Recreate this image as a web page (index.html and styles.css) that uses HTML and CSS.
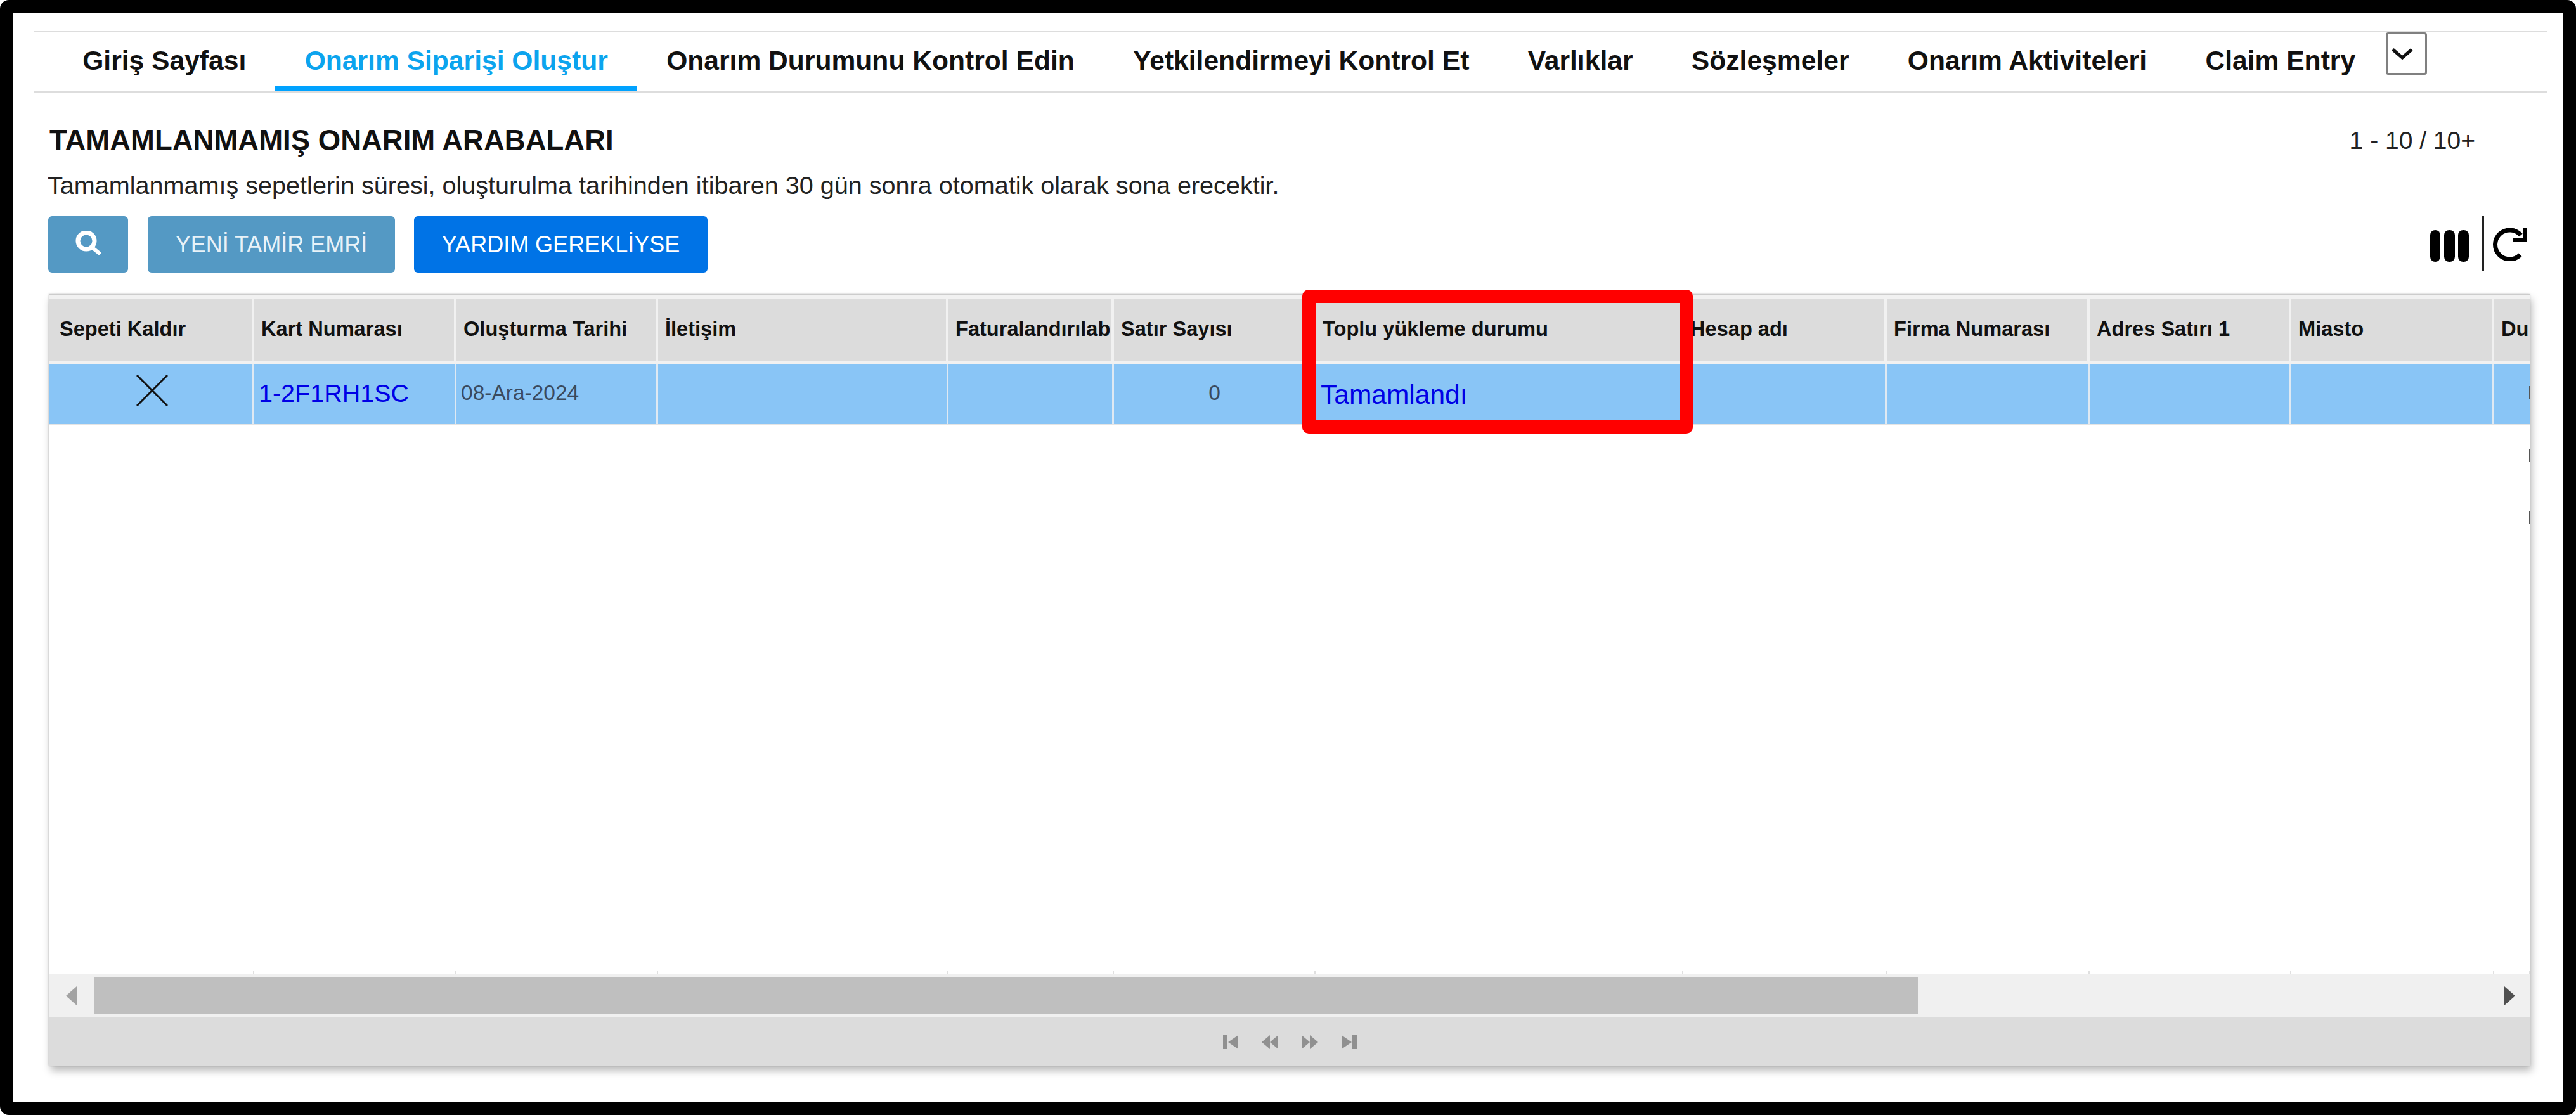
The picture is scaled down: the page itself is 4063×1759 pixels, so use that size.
FILE: index.html
```html
<!DOCTYPE html>
<html lang="tr">
<head>
<meta charset="utf-8">
<title>Tamamlanmamış Onarım Arabaları</title>
<link rel="stylesheet" href="styles.css">
</head>
<body>
<div class="frame">
  <nav class="nav">
    <a class="nav-item">Giriş Sayfası</a>
    <a class="nav-item active">Onarım Siparişi Oluştur</a>
    <a class="nav-item">Onarım Durumunu Kontrol Edin</a>
    <a class="nav-item">Yetkilendirmeyi Kontrol Et</a>
    <a class="nav-item">Varlıklar</a>
    <a class="nav-item">Sözleşmeler</a>
    <a class="nav-item">Onarım Aktiviteleri</a>
    <a class="nav-item">Claim Entry</a>
    <button class="more"><svg width="34" height="18" viewBox="0 0 34 18"><path d="M2 2 L17 15 L32 2" fill="none" stroke="#111" stroke-width="5"/></svg></button>
  </nav>
  <div class="title-row">
    <h1 class="title">TAMAMLANMAMIŞ ONARIM ARABALARI</h1>
    <div class="count">1 - 10 / 10+</div>
  </div>
  <p class="note">Tamamlanmamış sepetlerin süresi, oluşturulma tarihinden itibaren 30 gün sonra otomatik olarak sona erecektir.</p>
  <div class="toolbar">
    <button class="btn btn-muted btn-search"><svg width="40" height="38" viewBox="0 0 40 38"><circle cx="17" cy="16" r="13" fill="none" stroke="#fff" stroke-width="7"/><path d="M27 27 L37 35" stroke="#fff" stroke-width="6" stroke-linecap="round"/></svg></button>
    <button class="btn btn-muted btn-new">YENİ TAMİR EMRİ</button>
    <button class="btn btn-primary">YARDIM GEREKLİYSE</button>
    <div class="tools">
      <svg class="icon-cols" width="61" height="50" viewBox="0 0 61 50"><g fill="#000"><rect x="0" y="0" width="16" height="50" rx="8"/><rect x="22" y="0" width="17" height="50" rx="8"/><rect x="44" y="0" width="17" height="50" rx="8"/></g></svg>
      <span class="tool-sep"></span>
      <svg class="icon-refresh" width="54" height="53" viewBox="0 0 54 53"><path d="M43 43 A23 23 0 1 1 44 12" fill="none" stroke="#000" stroke-width="7"/><path d="M31 20 H50 V1" fill="none" stroke="#000" stroke-width="6"/></svg>
    </div>
  </div>
  <div class="table-wrap">
    <div class="table">
      <div class="cols head">
        <div class="th">Sepeti Kaldır</div>
        <div class="th">Kart Numarası</div>
        <div class="th">Oluşturma Tarihi</div>
        <div class="th">İletişim</div>
        <div class="th">Faturalandırılabilir</div>
        <div class="th">Satır Sayısı</div>
        <div class="th">Toplu yükleme durumu</div>
        <div class="th">Hesap adı</div>
        <div class="th">Firma Numarası</div>
        <div class="th">Adres Satırı 1</div>
        <div class="th">Miasto</div>
        <div class="th">Durum</div>
      </div>
      <div class="cols row selected">
        <div class="td td-x"><svg width="50" height="50" viewBox="0 0 50 50"><path d="M1 1 L49 49 M49 1 L1 49" stroke="#111" stroke-width="3"/></svg></div>
        <div class="td link">1-2F1RH1SC</div>
        <div class="td grey">08-Ara-2024</div>
        <div class="td"></div>
        <div class="td"></div>
        <div class="td grey num">0</div>
        <div class="td link status">Tamamlandı</div>
        <div class="td"></div>
        <div class="td"></div>
        <div class="td"></div>
        <div class="td"></div>
        <div class="td"><span class="clip-mark"></span></div>
      </div>
      <div class="blank"><span class="clip-mark"></span></div>
      <div class="blank"><span class="clip-mark"></span></div>
      <div class="spacer"></div>
      <div class="cols ticks">
        <i></i><i></i><i></i><i></i><i></i><i></i><i></i><i></i><i></i><i></i><i></i><i></i>
      </div>
      <div class="scrollbar">
        <span class="arrow arrow-left"></span>
        <span class="thumb"></span>
        <span class="arrow arrow-right"></span>
      </div>
      <div class="pager">
        <svg width="24" height="22" viewBox="0 0 24 22"><path d="M0 0H7V22H0Z M24 0V22L8 11Z" fill="#909090"/></svg>
        <svg width="26" height="22" viewBox="0 0 26 22"><path d="M13 0V22L0 11Z M26 0V22L13 11Z" fill="#909090"/></svg>
        <svg width="26" height="22" viewBox="0 0 26 22"><path d="M0 0V22L13 11Z M13 0V22L26 11Z" fill="#909090"/></svg>
        <svg width="24" height="22" viewBox="0 0 24 22"><path d="M17 0H24V22H17Z M0 0V22L16 11Z" fill="#909090"/></svg>
      </div>
    </div>
    <div class="highlight"></div>
  </div>
</div>
</body>
</html>
```
FILE: styles.css
```css
* { box-sizing: border-box; }
html, body { margin: 0; padding: 0; background: #fff; }
body { font-family: "Liberation Sans", Arial, sans-serif; color: #111; }
.frame {
  width: 4063px; height: 1759px;
  border: 21px solid #000; border-radius: 14px;
  background: #fff; overflow: hidden;
}
.nav {
  display: flex; align-items: flex-start;
  margin: 28px 25px 0 33px; height: 97px; padding-left: 30px;
  border-top: 2px solid #ddd; border-bottom: 2px solid #ddd;
}
.nav-item {
  padding: 0 46.2px; line-height: 88px; height: 93px;
  font-size: 42.6px; font-weight: 700; color: #111; white-space: nowrap;
  border-bottom: 8px solid transparent;
}
.nav-item.active { color: #0ca4ee; border-bottom-color: #00a2ff; }
.more {
  flex: none; width: 65px; height: 67px; margin: 0 0 0 2px; padding: 1px 0 0 6px;
  background: #fff; border: 3px solid #808080; border-radius: 4px;
  display: block;
}
.more svg { display: block; }
.title-row {
  display: flex; justify-content: space-between; align-items: center;
  height: 60px; margin: 46px 138px 0 57px;
}
.title { margin: 0; font-size: 45.5px; font-weight: 700; color: #111; }
.count { font-size: 39px; color: #222; }
.note { margin: 15px 0 0 54px; height: 50px; line-height: 50px; font-size: 39.6px; color: #222; white-space: nowrap; }
.toolbar { display: flex; align-items: flex-start; margin: 24px 56px 0 55px; height: 89px; }
.btn {
  height: 89px; border: 0; border-radius: 6px; color: #fff;
  font-family: inherit; font-size: 36px; padding: 0; margin-right: 30px;
}
.btn-muted { background: #5499c4; color: #e9f2f8; }
.btn-primary { background: #0073e6; width: 463px; }
.btn-search { width: 126px; padding-top: 4px; margin-right: 31px; }
.btn-new { width: 390px; }
.tools { margin-left: auto; display: flex; align-items: flex-start; height: 88px; margin-top: -1px; }
.icon-cols { margin-top: 23px; }
.icon-refresh { margin-top: 19px; }
.tool-sep { width: 3px; height: 88px; background: #222; margin: 0 14px 0 21px; }
.table-wrap { position: relative; margin: 34px 51px 0 57px; }
.table {
  display: flex; flex-direction: column; height: 1217px;
  background: #fff; border-top: 2px solid #ccc;
  box-shadow: 2px 8px 12px rgba(0,0,0,.28), -1px 0 3px rgba(0,0,0,.2);
}
.cols {
  display: grid;
  grid-template-columns: 323px 319px 318px 458px 261px 318px 580px 321px 320px 318px 320px 57px;
  overflow: hidden;
}
.head { flex: none; height: 108px; padding-top: 5px; background: #f1f1f1; }
.th {
  background: #dcdcdc; border-right: 4px solid #f1f1f1;
  padding: 0 0 0 11px; margin-bottom: 5px;
  font-size: 32.6px; font-weight: 700; color: #111; line-height: 96px;
  white-space: nowrap; overflow: hidden;
}
.th:first-child { padding-left: 16px; }
.row { flex: none; height: 97px; border-bottom: 2px solid #e4e4e4; }
.selected { background: #89c5f6; }
.td { border-right: 3px solid #dfe9f2; overflow: hidden; white-space: nowrap; line-height: 92px; padding-left: 7px; }
.td:last-child, .th:last-child { border-right: 0; }
.td-x { padding: 17px 0 0 137px; }
.td-x svg { display: block; }
.link { font-size: 39.5px; color: #0000e6; }
.grey { font-size: 33.5px; color: #3a4a5e; }
.num { text-align: right; padding-right: 147px; }
.status { padding-top: 3px; font-size: 42.5px; padding-left: 8px; }
.clip-mark { display: block; width: 2px; height: 21px; margin: 35px 0 0 48px; background: #555; }
.blank { flex: none; height: 98px; padding-top: 37px; }
.blank .clip-mark { margin: 0 0 0 3911px; }
.spacer { flex: 1; }
.ticks { flex: none; height: 5px; }
.ticks i { border-right: 2px solid #e0e0e0; }
.scrollbar {
  flex: none; display: flex; align-items: center;
  height: 67px; background: #f0f0f0; padding: 0 24px 0 26px;
}
.thumb { display: block; width: 2876px; height: 57px; margin-left: 28px; background: #bfbfbf; }
.arrow { display: block; width: 0; height: 0; border-top: 15px solid transparent; border-bottom: 15px solid transparent; }
.arrow-left { border-right: 17px solid #a3a3a3; }
.arrow-right { margin-left: auto; border-left: 17px solid #505050; }
.pager {
  flex: none; height: 77px; display: flex; justify-content: center; align-items: flex-start;
  gap: 37px; padding-top: 29px; background: #dcdcdc;
}
.highlight {
  position: absolute; left: 1976px; top: -7px; width: 616px; height: 227px;
  border: 21px solid #f00; border-radius: 10px; pointer-events: none;
}
```
